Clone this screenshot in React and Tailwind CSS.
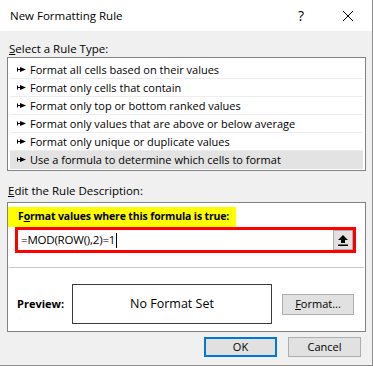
import React from "react";

const font = { fontFamily: '"Open Sans", "Noto Sans", sans-serif' };

function RuleArrow() {
  return (
    <svg width="9" height="7" viewBox="0 0 9 7" className="shrink-0">
      <rect x="0" y="1.5" width="1" height="4" fill="#000" />
      <rect x="0" y="3" width="4" height="1" fill="#000" />
      <polygon points="3,1 9,3.5 3,6" fill="#000" />
    </svg>
  );
}

const rules = [
  "Format all cells based on their values",
  "Format only cells that contain",
  "Format only top or bottom ranked values",
  "Format only values that are above or below average",
  "Format only unique or duplicate values",
  "Use a formula to determine which cells to format",
];

export default function App() {
  return (
    <div
      className="w-[373px] h-[366px] bg-[#f0f0f0] border-r border-b border-[#8c8c8c] flex flex-col text-[11px] text-black overflow-hidden"
      style={font}
    >
      {/* title bar */}
      <div className="h-[31px] bg-white flex items-center shrink-0">
        <span className="ml-[10px] text-[11.5px]">New Formatting Rule</span>
        <span className="ml-auto mr-[38px] text-[14px]">?</span>
        <svg width="12" height="12" viewBox="0 0 12 12" className="mr-[18px]">
          <path d="M1 1 L11 11 M11 1 L1 11" stroke="#000" strokeWidth="1" />
        </svg>
      </div>

      <div className="px-[7px] flex flex-col">
        <div className="mt-[10px] h-[16px] leading-[16px] pl-[2px] text-[11.5px]">
          <span className="underline">S</span>elect a Rule Type:
        </div>

        <div className="w-[359px] h-[114px] border border-[#828282] bg-white px-[2px] pt-[3px]">
          {rules.map((r, i) => (
            <div
              key={i}
              className={
                "h-[18px] flex items-center gap-[4px] pl-[7px] border-b whitespace-nowrap " +
                (i === 5 ? "bg-[#e3e3e3] border-transparent" : "border-[#ececec]")
              }
            >
              <RuleArrow />
              <span className="leading-none">{r}</span>
            </div>
          ))}
        </div>

        <div className="mt-[12px] h-[16px] leading-[16px] pl-[1px] text-[11.5px]">
          <span className="underline">E</span>dit the Rule Description:
        </div>

        <div className="mt-[3px] w-[359px] h-[130px] border border-[#828282] bg-white flex flex-col">
          <div className="mt-[4px] w-[228px] h-[20px] bg-[#ffff00] flex items-center pl-[10px] font-bold whitespace-nowrap text-[10.5px] tracking-[-0.15px]">
            <span>
              F<span className="underline">o</span>rmat values where this formula is true:
            </span>
          </div>
          <div className="ml-[7px] w-[341px] h-[26px] border-[3px] border-[#ff0000] flex items-center">
            <span className="ml-[3px] text-[11.5px] tracking-[-0.2px]">=MOD(ROW(),2)=1</span>
            <span className="ml-[1px] w-px h-[15px] bg-black"></span>
            <div className="ml-auto w-[20px] h-[20px] bg-[#e1e1e1] border border-[#adadad] flex items-center justify-center">
              <svg width="10" height="12" viewBox="0 0 10 12">
                <polygon points="5,1 10,6 7,6 7,9 3,9 3,6 0,6" fill="#000" />
                <rect x="0" y="10.5" width="10" height="1.5" fill="#000" />
              </svg>
            </div>
          </div>
          <div className="mt-[14px] mx-[1px] h-px bg-[#c8c8c8]"></div>
          <div className="mt-[16px] flex items-center">
            <span className="ml-[9px] w-[55px] font-bold">Preview:</span>
            <div className="w-[200px] h-[40px] border border-[#3c3c3c] flex items-center justify-center text-[12.5px]">
              No Format Set
            </div>
            <div className="ml-[10px] w-[72px] h-[21px] bg-[#e1e1e1] border border-[#adadad] flex items-center justify-center">
              <span>
                <span className="underline">F</span>ormat...
              </span>
            </div>
          </div>
        </div>

        <div className="mt-[5px] flex justify-end gap-[11px] pr-[4px]">
          <div className="w-[73px] h-[20px] bg-[#e1e1e1] border-2 border-[#0078d7] flex items-center justify-center">
            OK
          </div>
          <div className="w-[73px] h-[20px] bg-[#e1e1e1] border border-[#adadad] flex items-center justify-center">
            Cancel
          </div>
        </div>
      </div>
    </div>
  );
}
